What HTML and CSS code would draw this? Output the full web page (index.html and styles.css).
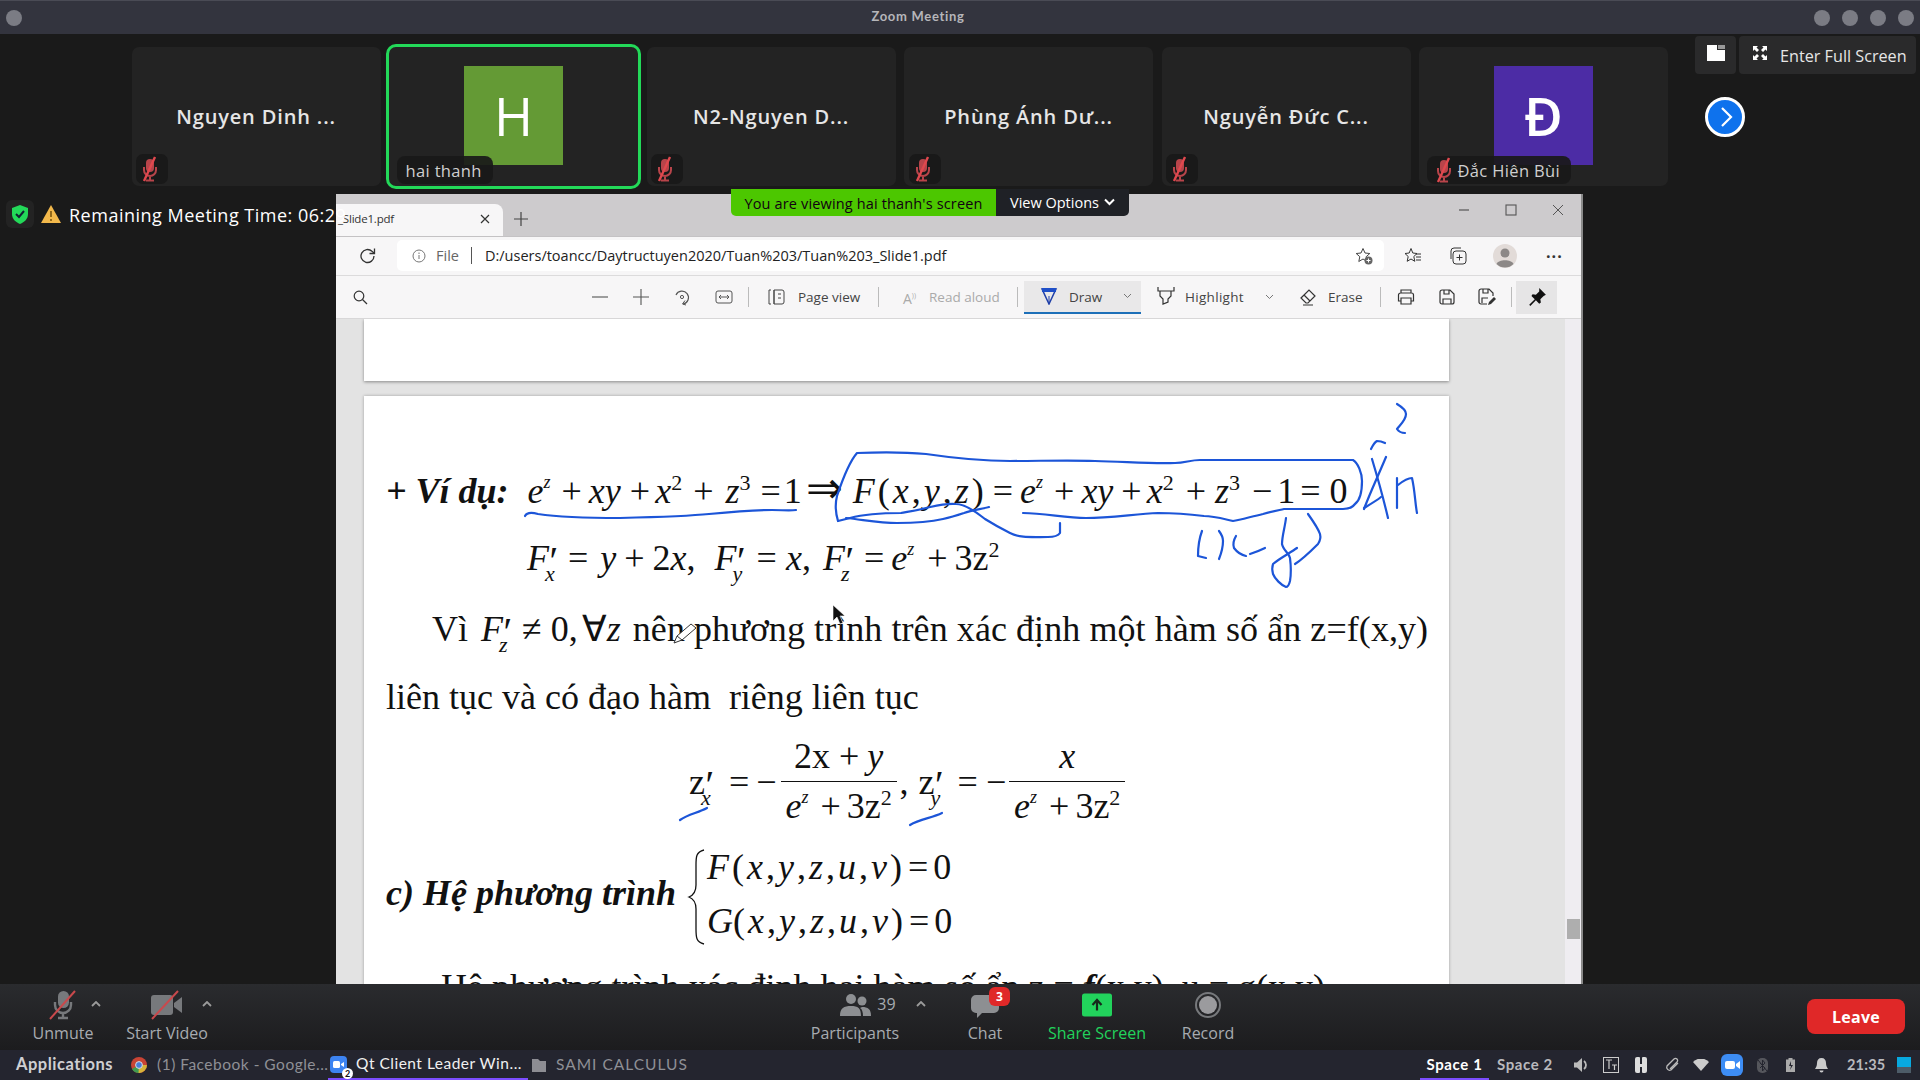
FILE: index.html
```html
<!DOCTYPE html>
<html lang="vi">
<head>
<meta charset="utf-8">
<title>Zoom Meeting</title>
<link rel="stylesheet" href="styles.css">
</head>
<body>
<svg class="defs" width="0" height="0">
  <symbol id="mutemic" viewBox="0 0 32 30">
    <rect x="10" y="5" width="8" height="13" rx="4" fill="#b8444a"/>
    <path d="M8 13v3a6 6 0 0 0 12 0v-3M14 22v4M10 26.500h8" fill="none" stroke="#b8444a" stroke-width="2"/>
    <path d="M19 3 8 27" stroke="#e0484e" stroke-width="2.400"/>
  </symbol>
</svg>

<header class="titlebar">
  <span class="dot dot-left"></span>
  <span class="title">Zoom Meeting</span>
  <div class="dots"><span class="dot"></span><span class="dot"></span><span class="dot"></span><span class="dot"></span></div>
</header>

<main class="meeting">
  <div class="strip">
    <div class="tile"><span class="tname">Nguyen Dinh ...</span><span class="micbox"><svg class="mic"><use href="#mutemic"/></svg></span></div>
    <div class="tile active"><span class="avatar green">H</span><span class="label"><span>hai thanh</span></span></div>
    <div class="tile"><span class="tname">N2-Nguyen D...</span><span class="micbox"><svg class="mic"><use href="#mutemic"/></svg></span></div>
    <div class="tile"><span class="tname">Phùng Ánh Dư...</span><span class="micbox"><svg class="mic"><use href="#mutemic"/></svg></span></div>
    <div class="tile"><span class="tname">Nguyễn Đức C...</span><span class="micbox"><svg class="mic"><use href="#mutemic"/></svg></span></div>
    <div class="tile"><span class="avatar purple">Đ</span><span class="label"><svg class="mic"><use href="#mutemic"/></svg><span>Đắc Hiên Bùi</span></span></div>
    <svg class="next" viewBox="0 0 40 40"><circle cx="20" cy="20" r="18.500" fill="#0e72ed" stroke="#fff" stroke-width="3"/><path d="M17 11l9 9-9 9" fill="none" stroke="#fff" stroke-width="2.200"/></svg>
  </div>

  <div class="topbtns">
    <span class="tbtn tsq"><svg width="18" height="16" viewBox="0 0 18 16"><path d="M0 0h10v5h8v11H0z" fill="#fff"/><rect x="11" y="0" width="7" height="4" fill="#999"/></svg></span>
    <span class="tbtn tfs"><svg width="16" height="16" viewBox="0 0 16 16"><path d="M1 1h5L4.500 2.500 7 5 5 7 2.500 4.500 1 6zM15 1v5l-1.500-1.500L11 7 9 5l2.500-2.500L10 1zM1 15v-5l1.500 1.500L5 9l2 2-2.500 2.500L6 15zM15 15h-5l1.500-1.500L9 11l2-2 2.500 2.500L15 10z" fill="#fff"/></svg><span>Enter Full Screen</span></span>
  </div>

  <div class="status">
    <span class="shield"><svg width="16" height="19" viewBox="0 0 16 19"><path d="M8 0l8 3v6c0 5-3.500 8-8 10-4.500-2-8-5-8-10V3z" fill="#23d959"/><path d="M4 9l3 3 5-6" fill="none" stroke="#123" stroke-width="2"/></svg></span>
    <svg class="warn" width="20" height="18" viewBox="0 0 20 18"><path d="M10 0l10 18H0z" fill="#f2b84b"/><path d="M10 6v6M10 14v2" stroke="#7a5510" stroke-width="1.600"/></svg>
    <span class="rem">Remaining Meeting Time: 06:29</span>
  </div>

  <div class="banner"><span class="bgreen">You are viewing hai thanh's screen</span><span class="bopts">View Options <svg width="11" height="8" viewBox="0 0 11 8"><path d="M1 1.500l4.500 4.500L10 1.500" fill="none" stroke="#fff" stroke-width="2"/></svg></span></div>

  <section class="window">
    <div class="tabbar">
      <div class="tab"><span class="tabname">_Slide1.pdf</span><svg class="tabx" width="10" height="10" viewBox="0 0 10 10"><path d="M1 1l8 8M9 1L1 9" stroke="#333" stroke-width="1.200"/></svg></div>
      <svg class="tabplus" width="14" height="14" viewBox="0 0 14 14"><path d="M7 0v14M0 7h14" stroke="#444" stroke-width="1.200"/></svg>
      <div class="winctl">
        <svg width="12" height="12" viewBox="0 0 12 12"><path d="M1 6h10" stroke="#555" stroke-width="1.200"/></svg>
        <svg width="12" height="12" viewBox="0 0 12 12"><rect x="1" y="1" width="10" height="10" fill="none" stroke="#555" stroke-width="1.100"/></svg>
        <svg width="12" height="12" viewBox="0 0 12 12"><path d="M1 1l10 10M11 1L1 11" stroke="#555" stroke-width="1"/></svg>
      </div>
    </div>

    <div class="addrrow">
      <svg class="reload" width="18" height="18" viewBox="0 0 18 18"><path d="M15 9a6.500 6.500 0 1 1-2-4.700L15 6" fill="none" stroke="#333" stroke-width="1.300"/><path d="M15.500 1.500V6.500H10.500" fill="none" stroke="#333" stroke-width="1.300"/></svg>
      <div class="addr">
        <svg width="14" height="14" viewBox="0 0 14 14"><circle cx="7" cy="7" r="6" fill="none" stroke="#777"/><path d="M7 6v4M7 3.500v1.500" stroke="#777"/></svg>
        <span class="afile">File</span><span class="asep"></span><span class="url">D:/users/toancc/Daytructuyen2020/Tuan%203/Tuan%203_Slide1.pdf</span>
        <svg class="astar" width="18" height="18" viewBox="0 0 18 18"><path d="M8 1.500l2 4.500 4.800.5-3.600 3.200 1 4.800L8 12l-4.200 2.500 1-4.800L1.200 6.500 6 6z" fill="none" stroke="#444"/><circle cx="13.500" cy="13.500" r="4" fill="#666"/><path d="M13.500 11.500v4M11.500 13.500h4" stroke="#fff"/></svg>
      </div>
      <svg class="afav" width="18" height="18" viewBox="0 0 18 18"><path d="M7 1.500l1.800 4.500 4.200.5-3.200 3 1 4.800L7 12l-3.800 2.300 1-4.800L1 6.500 5.200 6z" fill="none" stroke="#333"/><path d="M12 7h5M12 10h5M12 13h5" stroke="#333"/></svg>
      <svg class="acol" width="18" height="18" viewBox="0 0 18 18"><rect x="4" y="4" width="13" height="13" rx="3" fill="none" stroke="#333"/><path d="M10.500 7.500v6M7.500 10.500h6M2 12V4a3 3 0 0 1 3-3h7" fill="none" stroke="#333"/></svg>
      <svg class="aava" width="24" height="24" viewBox="0 0 24 24"><circle cx="12" cy="12" r="12" fill="#e2dbd8"/><circle cx="12" cy="9" r="4.500" fill="#8c8887"/><path d="M3.500 20c2-5 15-5 17 0a12 12 0 0 1-17 0z" fill="#8c8887"/></svg>
      <span class="amore">···</span>
    </div>

    <div class="pdfbar">
      <svg class="p-search" width="15" height="15" viewBox="0 0 15 15"><circle cx="6" cy="6" r="4.800" fill="none" stroke="#333" stroke-width="1.200"/><path d="M9.500 9.500L14 14" stroke="#333" stroke-width="1.200"/></svg>
      <svg class="p-minus" width="16" height="16" viewBox="0 0 16 16"><path d="M0 8h16" stroke="#555" stroke-width="1.100"/></svg>
      <svg class="p-plus" width="16" height="16" viewBox="0 0 16 16"><path d="M8 0v16M0 8h16" stroke="#555" stroke-width="1.100"/></svg>
      <svg class="p-rot" width="18" height="18" viewBox="0 0 18 18"><path d="M3 7a6.500 6.500 0 1 1 7 9" fill="none" stroke="#555" stroke-width="1.200"/><circle cx="9" cy="9" r="1.600" fill="none" stroke="#555"/><path d="M12 12.500l-2.500 3.500 3.500 1" fill="none" stroke="#555"/></svg>
      <svg class="p-fit" width="18" height="14" viewBox="0 0 18 14"><rect x="1" y="1" width="16" height="12" rx="2" fill="none" stroke="#555"/><path d="M4 7h10M4 7l2-2M4 7l2 2M14 7l-2-2M14 7l-2 2" stroke="#555" fill="none"/></svg>
      <span class="psep p-s1"></span>
      <svg class="p-pv" width="18" height="16" viewBox="0 0 18 16"><path d="M6 1h8a2 2 0 0 1 2 2v10a2 2 0 0 1-2 2H6zM6 1v14M3 1H1v14h2M10 5h3M10 9h3" fill="none" stroke="#444"/></svg>
      <span class="ptxt p-pvt">Page view</span>
      <span class="psep p-s2"></span>
      <span class="p-ra">A<sup>))</sup></span>
      <span class="ptxt dis p-rat">Read aloud</span>
      <span class="psep p-s3"></span>
      <div class="drawbtn">
        <svg width="18" height="18" viewBox="0 0 18 18"><path d="M2 2h14L9 17z" fill="none" stroke="#1f3fa8" stroke-width="1.500"/><path d="M2 1h14v4H2z" fill="#1f4fc8"/><path d="M9 9v8" stroke="#1f3fa8"/></svg>
        <span class="ptxt d-t">Draw</span>
        <svg class="d-c" width="9" height="6" viewBox="0 0 9 6"><path d="M1 1l3.500 3.500L8 1" fill="none" stroke="#777"/></svg>
      </div>
      <svg class="p-hl" width="18" height="20" viewBox="0 0 18 20"><path d="M1 1v4h16V1M3 5v5l3 3v5l5-2v-3l3-3V5" fill="none" stroke="#333" stroke-width="1.200"/></svg>
      <span class="ptxt p-hlt">Highlight</span>
      <svg class="p-hlc" width="9" height="6" viewBox="0 0 9 6"><path d="M1 1l3.500 3.500L8 1" fill="none" stroke="#777"/></svg>
      <svg class="p-er" width="18" height="18" viewBox="0 0 18 18"><path d="M2 10l8-8 6 6-7 7H7zM5 7l6 6M4 17h10" fill="none" stroke="#333" stroke-width="1.200"/></svg>
      <span class="ptxt p-ert">Erase</span>
      <span class="psep p-s4"></span>
      <svg class="p-pr" width="18" height="18" viewBox="0 0 18 18"><path d="M4 5V2h10v3M4 13H1.500V7a2 2 0 0 1 2-2h11a2 2 0 0 1 2 2v6H14M4 10h10v6H4z" fill="none" stroke="#333" stroke-width="1.200"/></svg>
      <svg class="p-sv" width="16" height="16" viewBox="0 0 16 16"><path d="M1 3a2 2 0 0 1 2-2h8l4 4v8a2 2 0 0 1-2 2H3a2 2 0 0 1-2-2zM4 15v-5h8v5M5 1v4h5V1" fill="none" stroke="#333" stroke-width="1.200"/></svg>
      <svg class="p-sa" width="18" height="18" viewBox="0 0 18 18"><path d="M9 16H3a2 2 0 0 1-2-2V3a2 2 0 0 1 2-2h8l4 4v3M4 15v-5h6M5 1v4h5V1" fill="none" stroke="#333" stroke-width="1.200"/><path d="M10 17l1-3 5-5 2 2-5 5z" fill="#333"/></svg>
      <span class="psep p-s5"></span>
      <div class="pinbtn"><svg width="20" height="20" viewBox="0 0 18 18"><path d="M11 1l6 6-2 1-3 3 .5 3-1.500 1-3-3-5 5-1-1 5-5-3-3 1-1.500 3 .5 3-3z" fill="#111"/></svg></div>
    </div>

    <div class="doc">
      <div class="pages">
        <div class="page pg1"></div>
        <div class="page pg2">
          <div class="ln l1">
            <b class="vd">+ Ví dụ:</b>
            <span class="seg s-e"><i>e</i><sup><i>z</i></sup><span class="g11-7">+</span><i>xy</i><span class="g9-5">+</span><i>x</i><sup>2</sup><span class="g11-12">+</span><i>z</i><sup>3</sup><span class="g10-3">=</span>1</span>
            <span class="seg s-ar">⇒</span>
            <span class="seg s-f"><span class="ls3"><i>F</i>(<i>x</i>,<i>y</i>,<i>z</i>)</span><span class="g6-7">=</span><i>e</i><sup><i>z</i></sup><span class="g11-7">+</span><i>xy</i><span class="g8-5">+</span><i>x</i><sup>2</sup><span class="g12-9">+</span><i>z</i><sup>3</sup><span class="g12-5">−</span>1<span class="g5-9">=</span>0</span>
          </div>
          <div class="ln l2">
            <i>F</i><span class="scr"><span class="pr">′</span><i class="sb">x</i></span><span class="g5-12">=</span><i>y</i><span class="g8-8">+</span>2<i>x</i>,<span class="gap19"></span><i>F</i><span class="scr"><span class="pr">′</span><i class="sb">y</i></span><span class="g6-9">=</span><i>x</i>,<span class="gap12"></span><i>F</i><span class="scr"><span class="pr">′</span><i class="sb">z</i></span><span class="g5-7">=</span><i>e</i><sup><i>z</i></sup><span class="g13-7">+</span>3z<sup>2</sup>
          </div>
          <div class="ln l3">
            <span class="vi">Vì</span><i>F</i><span class="scr"><span class="pr">′</span><i class="sb">z</i></span><span class="g5-9">≠</span>0,<span class="fa">∀</span><i>z</i><span class="nen">nên phương trình trên xác định một hàm số ẩn z=f(x,y)</span>
          </div>
          <div class="ln l4">liên tục và có đạo hàm&nbsp; riêng liên tục</div>
          <div class="fr-row">
            <span class="fz">z<span class="scr"><span class="pr">′</span><i class="sb">x</i></span><span class="g10-7">=</span>−</span>
            <span class="frac f1"><span class="num">2x<span class="g9-8">+</span><i>y</i></span><span class="den"><i>e</i><sup><i>z</i></sup><span class="g12-6">+</span>3z<sup>2</sup></span></span>
            <span class="fz fz2">,<span class="zz">z</span><span class="scr"><span class="pr">′</span><i class="sb">y</i></span><span class="g9-8">=</span>−</span>
            <span class="frac f2"><span class="num"><i>x</i></span><span class="den"><i>e</i><sup><i>z</i></sup><span class="g12-6">+</span>3z<sup>2</sup></span></span>
          </div>
          <div class="sys-row">
            <b class="he"><i>c) Hệ phương trình</i></b>
            <svg class="brace" width="18" height="96" viewBox="0 0 18 96"><path d="M17 1C9 3 9 8 9 16v20c0 6-2 10-7 12 5 2 7 6 7 12v20c0 8 0 13 8 15" fill="none" stroke="#111" stroke-width="1.300"/></svg>
            <div class="eqs">
              <div class="eq"><i>F</i>(<i>x</i>,<i>y</i>,<i>z</i>,<i>u</i>,<i>v</i>)<span class="g3-2">=</span>0</div>
              <div class="eq"><i class="gg">G</i>(<i>x</i>,<i>y</i>,<i>z</i>,<i>u</i>,<i>v</i>)<span class="g3-2">=</span>0</div>
            </div>
          </div>
          <div class="ln l7">Hệ phương trình xác định hai hàm số ẩn<span class="l7b">z = <b><i>f</i></b>(x,y), u = g(x,y)</span></div>
        </div>
      </div>
      <div class="scrollbar">
        <svg class="sb-up" width="8" height="5" viewBox="0 0 8 5"><path d="M4 0l4 5H0z" fill="#555"/></svg>
        <span class="sb-thumb"></span>
      </div>
      <svg class="ink" viewBox="336 318 1246 666" width="1246" height="666">
        <g fill="none" stroke="#1c55d8" stroke-width="2.200" stroke-linecap="round" stroke-linejoin="round">
          <path d="M525 515C527 511 531 511 538 513C565 517 600 517 620 517C660 516 690 515 709 513C740 510 760 509 772 509C782 509 790 510 796 509"/>
          <path d="M838 520C835 510 835 503 837 495C842 480 850 460 857 452C880 451 905 451 926 453C960 458 985 460 1010 460C1040 460 1070 459 1095 460C1130 461 1155 463 1175 462C1185 462 1190 459 1200 459L1353 459C1358 462 1362 472 1362 480C1362 492 1359 500 1355 503C1352 507 1348 508 1343 508L1284 508C1275 510 1270 511 1263 513C1250 516 1240 519 1233 520C1224 518 1214 515 1204 515C1188 513 1175 512 1158 512C1135 513 1110 517 1086 517C1065 517 1045 512 1023 512"/>
          <path d="M1060 522L1060 532C1058 535 1053 536 1048 536C1030 536 1020 537 1010 532C1000 527 993 523 985 518C975 510 965 503 956 503C945 502 935 505 926 507C915 510 905 511 901 512C885 512 865 513 850 517L838 520"/>
          <path d="M846 517C865 519 880 522 897 522C915 522 930 521 943 518C952 516 958 514 964 512C972 509 982 508 989 506"/>
          <path d="M1397 403C1402 406 1406 409 1406 413C1406 419 1400 424 1397 428C1399 431 1402 432 1405 432"/>
          <path d="M1371 448C1373 444 1375 441 1377 440C1380 440 1383 441 1385 442"/>
          <path d="M1372 458C1378 478 1384 500 1388 517"/>
          <path d="M1386 456C1378 475 1370 492 1364 508"/>
          <path d="M1364 507C1369 504 1376 500 1381 496"/>
          <path d="M1397 477L1397 507M1398 484C1403 480 1408 477 1412 477C1415 490 1415 502 1417 512"/>
          <path d="M1202 530C1199 538 1198 548 1198 555L1206 557"/>
          <path d="M1219 530C1222 534 1223 537 1223 540C1223 548 1221 553 1219 558"/>
          <path d="M1236 535C1233 540 1233 544 1234 547C1237 551 1241 554 1246 555"/>
          <path d="M1250 553C1256 551 1261 549 1265 547"/>
          <path d="M1286 517C1285 526 1282 535 1282 543C1283 549 1289 552 1290 557C1291 565 1291 574 1290 580C1289 584 1288 586 1286 586C1281 584 1275 578 1273 573C1272 569 1272 566 1273 563C1280 557 1290 552 1297 547"/>
          <path d="M1308 513C1313 520 1318 527 1320 533C1321 537 1320 540 1318 543C1311 550 1303 558 1295 563"/>
          <path d="M680 819C688 813 698 812 707 807"/>
          <path d="M910 824C920 818 932 817 942 812"/>
        </g>
        <path d="M833 604l0 16 4-4 3 7 3-1-3-7 5 0z" fill="#111" stroke="#fff" stroke-width=".6"/>
        <path d="M674 642l3-7 14-12 5 4-14 12zM677 635l5 4" fill="#fff" stroke="#333" stroke-width="1"/>
      </svg>
    </div>
  </section>
</main>

<footer class="controls">
  <div class="ctl c-mute">
    <svg class="cic" width="32" height="30" viewBox="0 0 32 30"><rect x="11" y="1" width="11" height="17" rx="5.500" fill="#77797c"/><path d="M8 12v3a8 8 0 0 0 16 0v-3M16 23v4M11 28h10" fill="none" stroke="#77797c" stroke-width="2.400"/><path d="M28 1L3 29" stroke="#c9494c" stroke-width="2"/></svg>
    <span class="clabel">Unmute</span>
    <svg class="caret car1" width="10" height="6" viewBox="0 0 10 6"><path d="M1 5l4-4 4 4" fill="none" stroke="#9b9b9b" stroke-width="1.800"/></svg>
  </div>
  <div class="ctl c-video">
    <svg class="cic" width="34" height="30" viewBox="0 0 34 30"><rect x="1" y="5" width="22" height="20" rx="3" fill="#77797c"/><path d="M24 13l8-6v16l-8-6z" fill="#77797c"/><path d="M28 1L2 29" stroke="#c9494c" stroke-width="2"/></svg>
    <span class="clabel">Start Video</span>
    <svg class="caret car2" width="10" height="6" viewBox="0 0 10 6"><path d="M1 5l4-4 4 4" fill="none" stroke="#9b9b9b" stroke-width="1.800"/></svg>
  </div>
  <div class="ctl c-part">
    <div class="cic picons">
      <svg width="31" height="24" viewBox="0 0 31 24"><circle cx="11" cy="6" r="5" fill="#8d8f92"/><circle cx="22" cy="8" r="4.500" fill="#8d8f92"/><path d="M0 23c0-8 4-10 11-10s10 2 10 10zM22 14c6 0 9 2 9 9h-8c0-4-1-7-3-8z" fill="#8d8f92"/></svg>
      <span class="pcount">39</span>
    </div>
    <span class="clabel">Participants</span>
    <svg class="caret car3" width="10" height="6" viewBox="0 0 10 6"><path d="M1 5l4-4 4 4" fill="none" stroke="#9b9b9b" stroke-width="1.800"/></svg>
  </div>
  <div class="ctl c-chat">
    <svg class="cic" width="28" height="26" viewBox="0 0 28 26"><path d="M5 3h18a5 5 0 0 1 5 5v8a5 5 0 0 1-5 5H11l-5 5v-5H5a5 5 0 0 1-5-5V8a5 5 0 0 1 5-5z" fill="#8d8f92"/></svg>
    <span class="clabel">Chat</span>
    <span class="badge">3</span>
  </div>
  <div class="ctl c-share">
    <svg class="cic" width="30" height="23" viewBox="0 0 30 23"><rect width="30" height="23" rx="2.500" fill="#22d35c"/><path d="M15 17V8M10.500 11.500L15 6.500l4.500 5" fill="none" stroke="#16291c" stroke-width="2.200"/></svg>
    <span class="clabel cgreen">Share Screen</span>
  </div>
  <div class="ctl c-rec">
    <svg class="cic" width="26" height="26" viewBox="0 0 26 26"><circle cx="13" cy="13" r="12" fill="none" stroke="#77797c" stroke-width="2"/><circle cx="13" cy="13" r="9" fill="#9b9b9e"/></svg>
    <span class="clabel">Record</span>
  </div>
  <button class="leave">Leave</button>
</footer>

<nav class="taskbar">
  <span class="tk-apps">Applications</span>
  <svg class="tk-chrome" width="16" height="16" viewBox="0 0 16 16"><circle cx="8" cy="8" r="8" fill="#c94435"/><path d="M8 8L1 12a8 8 0 0 0 7 4z" fill="#3f9b4f"/><path d="M8 8l-.5 8a8 8 0 0 0 8.500-8z" fill="#d6b43a"/><circle cx="8" cy="8" r="3.400" fill="#4a7dd8" stroke="#ddd"/></svg>
  <span class="tk-w tk-fb">(1) Facebook - Google...</span>
  <div class="tk-active">
    <span class="tk-zoom"><svg width="17" height="17" viewBox="0 0 17 17"><rect width="17" height="17" rx="4" fill="#3d84f2"/><rect x="3" y="5" width="7" height="7" rx="1.500" fill="#fff"/><path d="M11 8l3-2v5l-3-2z" fill="#fff"/></svg><span class="tk-2">2</span></span>
    <span class="tk-w tk-qt">Qt Client Leader Win...</span>
  </div>
  <svg class="tk-folder" width="14" height="14" viewBox="0 0 14 14"><path d="M0 1h6l2 2h6v11H0z" fill="#8d8d93"/></svg>
  <span class="tk-w tk-sami">SAMI CALCULUS</span>
  <span class="tk-sp sp1">Space 1</span>
  <span class="tk-sp sp2">Space 2</span>
  <svg class="tr tr-vol" width="14" height="14" viewBox="0 0 14 14"><path d="M0 4.500h3L8 0v14L3 9.500H0z" fill="#bbb"/><path d="M10 3a5 5 0 0 1 0 8" fill="none" stroke="#bbb" stroke-width="1.800"/></svg>
  <svg class="tr tr-tt" width="16" height="16" viewBox="0 0 16 16"><rect x=".5" y=".5" width="15" height="15" fill="none" stroke="#ccc"/><path d="M3 3h6M6 3v9M9 8h5M11.500 8v5" stroke="#ccc" stroke-width="1.200"/></svg>
  <svg class="tr tr-h" width="14" height="16" viewBox="0 0 14 16"><path d="M1 2a2 2 0 0 1 2-2h2a1 1 0 0 1 1 1v14a1 1 0 0 1-1 1H3a2 2 0 0 1-2-2zM8 1a1 1 0 0 1 1-1h2a2 2 0 0 1 2 2v12a2 2 0 0 1-2 2H9a1 1 0 0 1-1-1v-5H6V7h2z" fill="#ddd"/></svg>
  <svg class="tr tr-cl" width="16" height="16" viewBox="0 0 16 16"><path d="M14 6l-7 7a3 3 0 0 1-4-4l7-7a2 2 0 0 1 3 3l-7 7" fill="none" stroke="#bbb" stroke-width="1.300"/></svg>
  <svg class="tr tr-wf" width="16" height="12" viewBox="0 0 16 12"><path d="M0 3a11 11 0 0 1 16 0l-8 9z" fill="#ccc"/></svg>
  <svg class="tr tr-zm" width="22" height="22" viewBox="0 0 22 22"><rect width="22" height="22" rx="6" fill="#3d8df5"/><rect x="4" y="7" width="10" height="8" rx="2" fill="#fff"/><path d="M15 10l4-3v8l-4-3z" fill="#fff"/></svg>
  <svg class="tr tr-bt" width="13" height="15" viewBox="0 0 13 15"><rect x="1" y="0" width="11" height="15" rx="5" fill="#55565c"/><path d="M2 2l9 11M4 5l5 5-2.500 3V2L9 5 4 10" fill="none" stroke="#24252f"/></svg>
  <svg class="tr tr-bat" width="9" height="14" viewBox="0 0 9 14"><path d="M2.500 0h4v1.500H9V14H0V1.500h2.500z" fill="#aaa"/><path d="M5 3L3 8h2l-1 4 3-5H5z" fill="#24252f"/></svg>
  <svg class="tr tr-bl" width="13" height="15" viewBox="0 0 13 15"><path d="M6.500 0c3 0 4.500 2 4.500 5 0 3 1 4 2 6H0c1-2 2-3 2-6 0-3 1.500-5 4.500-5zM4.500 12.500h4a2 2 0 0 1-4 0z" fill="#ccc"/></svg>
  <span class="tk-sp tk-clock">21:35</span>
  <svg class="tr tr-blk" width="14" height="16" viewBox="0 0 14 16"><rect width="14" height="10" fill="#08a9e0"/><rect y="10" width="14" height="6" fill="#4d5c68"/></svg>
</nav>
</body>
</html>
```

FILE: styles.css
```css
* { box-sizing: border-box; }
html, body { margin: 0; padding: 0; }
body {
  width: 1920px; height: 1080px; overflow: hidden;
  display: flex; flex-direction: column;
  background: #1a1a1a;
  font-family: "Open Sans", "Noto Sans", sans-serif;
}
.defs { display: block; height: 0; }

/* title bar */
.titlebar {
  height: 34px; flex: none;
  background: #33343e; border-top: 1px solid #4a4b55;
  display: flex; align-items: center; justify-content: space-between;
  padding: 0 6px 0 6px; position: relative;
}
.dot { width: 16px; height: 16px; border-radius: 50%; background: #7b7c84; display: block; }
.dots { display: flex; gap: 12px; }
.title {
  position: absolute; left: 0; right: 84px; top: 7px; text-align: center;
  font: 700 13px Lato, sans-serif; color: #b6b6ba; letter-spacing: .7px;
}

/* meeting */
.meeting { position: relative; flex: 1; min-height: 0; display: flex; flex-direction: column; background: #1a1a1a; }
.strip { height: 160px; flex: none; display: flex; gap: 8.5px; padding: 12.5px 0 0 131.5px; align-items: flex-start; }
.tile {
  width: 249px; height: 139.5px; background: #232323; border-radius: 7px; position: relative;
  display: flex; align-items: center; justify-content: center;
}
.tile.active { outline: 3px solid #23d959; }
.tname { color: #e6e6e6; font-weight: 600; font-size: 20px; letter-spacing: .85px; }
.micbox { position: absolute; left: 4.5px; bottom: 2px; width: 32px; height: 30px; background: #191919; border-radius: 7px; display: flex; }
.mic { width: 32px; height: 30px; flex: none; }
.avatar { width: 99px; height: 99px; display: flex; align-items: center; justify-content: center; color: #fff; font-size: 53px; font-weight: 400; margin-top: -1px; }
.green { background: #649a35; }
.purple { background: #4c2ca5; font-weight: 600; }
.label {
  position: absolute; left: 8px; bottom: 2px; height: 28px; padding: 0 11px 0 8.500px; border-radius: 8px;
  background: rgba(25,25,25,.92); color: #cfcfcf; font-size: 16.5px; letter-spacing: .35px;
  display: flex; align-items: center; white-space: nowrap;
}
.label .mic { margin-left: -6px; margin-right: -4px; }
.next { width: 40px; height: 40px; flex: none; margin: 50px 0 0 28.500px; }

.topbtns { position: absolute; top: 2px; right: 4px; display: flex; gap: 3px; height: 38px; }
.tbtn { background: #2a2a2b; border-radius: 4px; display: flex; align-items: center; height: 38px; }
.tsq { width: 41px; justify-content: center; padding-bottom: 4px; }
.tfs { width: 177px; padding-left: 13px; color: #e6e6e6; font-size: 16.2px; gap: 12px; padding-top: 1px; }
.tfs svg { margin-bottom: 6px; }

.status { position: absolute; left: 6px; top: 166px; display: flex; align-items: center; z-index: 3; }
.shield { width: 28px; height: 28px; background: #232323; border-radius: 6px; display: flex; align-items: center; justify-content: center; }
.warn { margin-left: 7px; }
.rem { color: #fff; font-size: 18px; margin-left: 8px; letter-spacing: .5px; white-space: nowrap; padding-top: 1px; }

.banner { position: absolute; left: 731px; top: 155px; height: 27px; display: flex; z-index: 3; font-size: 14.5px; }
.bgreen { width: 265px; background: #4cc700; color: #101; border-radius: 0 0 0 5px; display: flex; align-items: center; justify-content: center; letter-spacing: .15px; padding-top: 1px; }
.bopts { width: 133px; background: #1f2126; color: #fff; border-radius: 0 0 5px 0; display: flex; align-items: center; justify-content: center; gap: 5px; padding-bottom: 1px; }

/* browser window */
.window {
  margin-left: 336px; width: 1247px; flex: 1; min-height: 0; overflow: hidden;
  display: flex; flex-direction: column; background: #f7f6f7; border-right: 2px solid #8a8a8a;
}
.tabbar { height: 42px; flex: none; background: #cdcbcd; display: flex; position: relative; align-items: center; }
.tab { width: 167px; height: 32px; margin-top: 10px; background: #f7f6f7; border-radius: 0 8px 0 0; display: flex; align-items: center; padding: 0 0 0 5px; }
.tabname { font-size: 11.5px; color: #333; flex: 1; margin-top: -3px; margin-left: -3px; letter-spacing: -.2px; }
.tabx { margin-right: 13px; margin-top: -2px; }
.tabplus { margin-left: 11px; margin-top: 8px; }
.winctl { position: absolute; right: 17px; top: 10px; display: flex; gap: 35px; }

.addrrow { height: 40px; flex: none; display: flex; align-items: center; background: #f7f6f7; border-top: 1px solid #c4c2c4; border-bottom: 1px solid #dcdbdc; padding-bottom: 1px; }
.reload { margin-left: 23px; }
.addr { margin-left: 20px; width: 987px; height: 31px; background: #fff; border-radius: 5px; display: flex; align-items: center; padding-left: 15px; font-size: 14.5px; color: #222; position: relative; }
.afile { color: #666; margin-left: 10px; }
.asep { width: 1px; height: 17px; background: #555; margin: 0 13px 0 12px; }
.url { color: #222; white-space: nowrap; }
.astar { position: absolute; right: 11px; top: 7px; }
.afav { margin-left: 20px; }
.acol { margin-left: 27px; }
.aava { margin-left: 26px; }
.amore { margin-left: 29px; font-size: 16px; font-weight: 700; color: #333; letter-spacing: 1px; }

.pdfbar { height: 43px; flex: none; display: flex; align-items: center; background: #f7f6f7; border-bottom: 1px solid #d8d7d8; position: relative; }
.ptxt { font-size: 13.5px; color: #444; white-space: nowrap; }
.dis { color: #aaa; }
.psep { width: 1px; height: 20px; background: #bbb; flex: none; }
.p-search { margin-left: 17px; }
.p-minus { margin-left: 224px; }
.p-plus { margin-left: 25px; }
.p-rot { margin-left: 24px; }
.p-fit { margin-left: 24px; }
.p-s1 { margin-left: 15px; }
.p-pv { margin-left: 19px; }
.p-pvt { margin-left: 12px; width: 62px; }
.p-s2 { margin-left: 18px; }
.p-ra { margin-left: 24px; color: #aaa; font-size: 14px; width: 18px; line-height: 14px; flex: none; }
.p-ra sup { font-size: 7px; }
.p-rat { margin-left: 8px; width: 69px; }
.p-s3 { margin-left: 19px; }
.drawbtn { margin-left: 6px; width: 117px; height: 33px; background: #e9e8e9; border-bottom: 2px solid #1d6fb8; display: flex; align-items: center; padding-left: 16px; flex: none; }
.d-t { margin-left: 11px; width: 34px; padding-top: 2px; }
.d-c { margin-left: 20px; }
.p-hl { margin-left: 16px; margin-top: -3px; }
.p-hlt { margin-left: 10px; width: 58px; letter-spacing: .3px; }
.p-hlc { margin-left: 22px; }
.p-er { margin-left: 25px; }
.p-ert { margin-left: 11px; width: 34px; }
.p-s4 { margin-left: 18px; }
.p-pr { margin-left: 16px; }
.p-sv { margin-left: 24px; }
.p-sa { margin-left: 23px; }
.p-s5 { margin-left: 15px; }
.pinbtn { margin-left: 4px; width: 41px; height: 33px; background: #e6e5e6; display: flex; align-items: center; justify-content: center; flex: none; }

/* document */
.doc { flex: 1; min-height: 0; position: relative; display: flex; background: #e3e3e3; overflow: hidden; }
.pages { width: 1229px; flex: none; padding-left: 28px; }
.page { width: 1085px; background: #fff; }
.pg1 { height: 62px; box-shadow: 0 1px 3px rgba(0,0,0,.4); }
.pg2 {
  margin-top: 15px; padding: 75px 0 0 22px; height: 640px; box-shadow: 0 0 3px rgba(0,0,0,.3);
  font-family: "Liberation Serif", serif; font-size: 36px; color: #111; line-height: 40px; white-space: nowrap;
}
.scrollbar { flex: 1; background: #efedf1; position: relative; }
.sb-up { position: absolute; left: 4px; top: -34px; }
.sb-thumb { position: absolute; left: 2px; top: 600px; width: 13px; height: 20px; background: #aeaeae; display: block; }
.ink { position: absolute; left: 0; top: 0; pointer-events: none; }

.ln { height: 40px; display: block; }
.pg2 sup { font-size: 22px; line-height: 0; vertical-align: 13px; }
.pg2 sup i { font-size: 18px; position: relative; top: -2px; }

/* per-operator spacing in the typeset math: left-right */
.g3-2 { margin: 0 2px 0 3px; }
.g5-7 { margin: 0 7px 0 5px; }
.g5-9 { margin: 0 9px 0 5px; }
.g5-12 { margin: 0 12px 0 5px; }
.g6-7 { margin: 0 7px 0 6px; }
.g6-9 { margin: 0 9px 0 6px; }
.g8-5 { margin: 0 5px 0 8px; }
.g8-8 { margin: 0 8px; }
.g9-5 { margin: 0 5px 0 9px; }
.g9-8 { margin: 0 8px 0 9px; }
.g10-3 { margin: 0 3px 0 10px; }
.g10-7 { margin: 0 7px 0 10px; }
.g11-7 { margin: 0 7px 0 11px; }
.g11-12 { margin: 0 12px 0 11px; }
.g12-5 { margin: 0 5px 0 12px; }
.g12-6 { margin: 0 6px 0 12px; }
.g12-9 { margin: 0 9px 0 12px; }
.g13-7 { margin: 0 7px 0 13px; }
.gap19 { margin-left: 19px; }
.gap12 { margin-left: 12px; }
.ls3 { letter-spacing: 3px; }

.seg { display: inline-block; }
.vd { font-style: italic; }
.l1 { display: flex; }
.s-e { margin-left: 19px; }
.s-ar { margin-left: 4px; font-size: 44px; line-height: 36px; }
.s-f { margin-left: 10px; }
.l2 { margin-top: 27px; padding-left: 141px; }
.l3 { margin-top: 31px; padding-left: 46px; }
.l4 { margin-top: 28px; }
.vi { margin-right: 13px; }
.fa { margin-left: 4px; }
.nen { margin-left: 12px; letter-spacing: .07px; }
.scr { display: inline-block; width: 14px; height: 0; position: relative; }
.pr { position: absolute; left: -2px; top: -29px; font-size: 40px; line-height: 40px; font-style: italic; }
.sb { position: absolute; left: -4px; top: -7px; font-size: 22px; line-height: 22px; }

.fr-row { display: flex; align-items: center; margin: 19px 0 0 303px; height: 92px; }
.fz { padding-top: 0; }
.frac { display: flex; flex-direction: column; align-items: center; width: 116px; margin-top: -3px; }
.f1 { margin-left: 4px; }
.f2 { margin-left: 3px; }
.frac .num { height: 40px; margin-bottom: 5px; }
.frac .den { height: 44px; border-top: 1.500px solid #111; padding-top: 4px; width: 100%; text-align: center; }
.fz2 { margin-left: 3px; }
.zz { margin-left: 10px; }

.sys-row { display: flex; align-items: center; height: 94px; margin-top: 19px; }
.he { width: 301px; margin-top: -2px; }
.brace { flex: none; margin-top: 6px; }
.eqs { letter-spacing: 3px; margin-left: 2px; }
.eq { height: 54px; line-height: 40px; }
.eq:last-child { height: 40px; }
.gg { margin-right: -3px; }
.l7 { margin: 26px 0 0 55px; }
.l7b { margin-left: 9px; }

/* zoom toolbar */
.controls {
  height: 66px; flex: none; position: relative;
  background: linear-gradient(#2a2b2e, #1c1c1e);
  display: flex; align-items: flex-start;
}
.ctl { position: relative; display: flex; flex-direction: column; align-items: center; padding-top: 6px; flex: none; }
.cic { height: 30px; display: block; }
.clabel { font-size: 16px; line-height: 20px; color: #a7abb0; margin-top: 3px; white-space: nowrap; }
.cgreen { color: #22d35c; }
.c-mute { margin-left: 23px; width: 80px; }
.c-video { margin-left: 21px; width: 86px; }
.c-part { margin-left: 595px; width: 100px; }
.c-chat { margin-left: 45px; width: 70px; }
.c-share { margin-left: 22px; width: 110px; }
.c-rec { margin-left: 21px; width: 70px; }
.caret { position: absolute; top: 17px; }
.car1 { left: 68px; }
.car2 { left: 78px; }
.car3 { left: 111px; }
.picons { display: flex; align-items: center; gap: 6px; margin-left: 26px; }
.pcount { font-size: 16px; color: #a7abb0; margin-top: -3px; }
.badge {
  position: absolute; left: 39px; top: 3px; width: 21px; height: 19px; border-radius: 6px;
  background: #e02828; color: #fff; font-size: 12px; font-weight: 700; display: flex; align-items: center; justify-content: center;
}
.leave {
  margin: 15px 15px 0 auto; width: 98px; height: 35px; border: 0; border-radius: 8px; flex: none;
  background: #e02828; color: #fff; font: 700 16px "Open Sans", sans-serif; letter-spacing: .3px;
}

/* taskbar */
.taskbar {
  height: 30px; flex: none; background: #24252f; display: flex; align-items: center;
  font-family: Lato, sans-serif; font-size: 16px;
}
.tk-apps { margin-left: 16px; width: 96px; color: #cfcfd2; font-weight: 700; font-size: 16.5px; letter-spacing: .5px; white-space: nowrap; padding-bottom: 2px; }
.tk-chrome { margin-left: 19px; }
.tk-w { white-space: nowrap; color: #8f9096; letter-spacing: .5px; font-size: 15.5px; padding-bottom: 2px; }
.tk-fb { margin-left: 10px; width: 171px; }
.tk-active { margin-left: 0; width: 200px; height: 30px; display: flex; align-items: center; border-bottom: 2px solid #7c4dff; padding-left: 2px; flex: none; }
.tk-zoom { position: relative; width: 17px; height: 17px; display: block; }
.tk-2 { position: absolute; right: -6px; bottom: -6px; width: 11px; height: 11px; border-radius: 50%; background: #fff; color: #111; font-size: 9px; font-weight: 700; line-height: 11px; text-align: center; }
.tk-qt { margin-left: 9px; color: #f0f0f0; letter-spacing: .5px; }
.tk-folder { margin-left: 4px; }
.tk-sami { margin-left: 10px; width: 131px; letter-spacing: 1px; }
.tk-sp { font-weight: 700; font-size: 15px; color: #b9b9bd; white-space: nowrap; letter-spacing: .6px; }
.sp1 { margin-left: 733px; width: 69px; height: 30px; line-height: 28px; text-align: center; color: #fff; border-bottom: 2px solid #7c4dff; flex: none; }
.sp2 { margin-left: 8px; width: 59px; padding-bottom: 2px; }
.tr { flex: none; display: block; }
.tr-vol { margin-left: 18px; }
.tr-tt { margin-left: 15px; }
.tr-h { margin-left: 15px; }
.tr-cl { margin-left: 16px; }
.tr-wf { margin-left: 13px; }
.tr-zm { margin-left: 12px; }
.tr-bt { margin-left: 13px; }
.tr-bat { margin-left: 17px; }
.tr-bl { margin-left: 20px; }
.tk-clock { margin-left: 19px; width: 34px; letter-spacing: .2px; font-size: 14.5px; padding-bottom: 2px; }
.tr-blk { margin-left: 16px; }
```
